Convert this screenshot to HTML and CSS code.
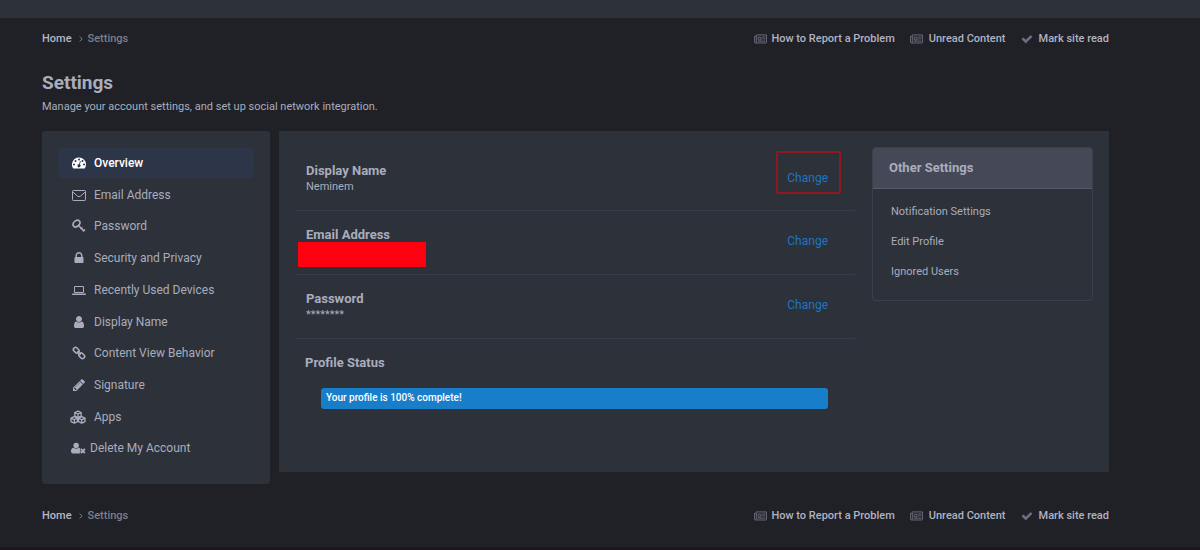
FILE: index.html
```html
<!DOCTYPE html>
<html lang="en">
<head>
  <meta charset="UTF-8">
  <meta name="viewport" content="width=device-width, initial-scale=1.0">
  <title>Settings</title>
  <link rel="stylesheet" href="styles.css">
</head>
<body>
  <svg class="sprite" aria-hidden="true">
    <symbol id="i-news" viewBox="0 0 14 10">
      <path d="M2.5 1v7.2a.9.9 0 0 1-1.9 0V2H2.5M2.5.6h10.9v8a.7.7 0 0 1-.7.7H1.6" fill="none" stroke="currentColor" stroke-width="1"/>
      <path d="M4.500 3h3v3h-3zM8.800 2.800h3.400M8.800 4.800h3.400M4 7.300h8.200" fill="none" stroke="currentColor" stroke-width="1"/>
    </symbol>
    <symbol id="i-check" viewBox="0 0 1792 1792">
      <path d="M1671 566q0 40-28 68l-724 724-136 136q-28 28-68 28t-68-28l-136-136-362-362q-28-28-28-68t28-68l136-136q28-28 68-28t68 28l294 295 656-657q28-28 68-28t68 28l136 136q28 28 28 68z"/>
    </symbol>
    <symbol id="i-overview" viewBox="0 0 14 14">
      <path fill-rule="evenodd" d="M7 1.500a7 7 0 0 1 7 7c0 1.400-.4 2.700-1.100 3.800-.1.200-.3.200-.4.200h-11c-.2 0-.3 0-.4-.2A7 7 0 0 1 7 1.500zM2 7.500a1 1 0 1 0 0 2 1 1 0 0 0 0-2zM3.500 4a1 1 0 1 0 0 2 1 1 0 0 0 0-2zM7 2.500a1 1 0 1 0 0 2 1 1 0 0 0 0-2zM10.500 4a1 1 0 1 0 0 2 1 1 0 0 0 0-2zM12 7.500a1 1 0 1 0 0 2 1 1 0 0 0 0-2zM7.900 5.300 7.100 8.300a1.500 1.500 0 1 0 .8.300l.8-3c.1-.6-.7-.9-.8-.3z"/>
    </symbol>
    <symbol id="i-mail" viewBox="0 0 14 14">
      <path d="M1.300 2.500h11.400a.8.8 0 0 1 .8.800v8.400a.8.8 0 0 1-.8.800H1.300a.8.8 0 0 1-.8-.8V3.300a.8.8 0 0 1 .8-.8zM.8 4l4.700 4.100q1.500 1.200 3 0L13.200 4" fill="none" stroke="currentColor"/>
    </symbol>
    <symbol id="i-key" viewBox="0 0 14 14">
      <g fill="none" stroke="currentColor" stroke-width="1.600">
        <ellipse cx="4.500" cy="4.600" rx="3.800" ry="2.800" transform="rotate(-42 4.500 4.600)"/>
        <path d="M6 6l6.200 6.200M8.700 10.200l1.700-1.700M11 12.600l1.900-2.200"/>
      </g>
    </symbol>
    <symbol id="i-lock" viewBox="0 0 1792 1792">
      <path d="M640 768h512v-192q0-106-75-181t-181-75-181 75-75 181v192zm832 96v576q0 40-28 68t-68 28h-960q-40 0-68-28t-28-68v-576q0-40 28-68t68-28h32v-192q0-184 132-316t316-132 316 132 132 316v192h32q40 0 68 28t28 68z"/>
    </symbol>
    <symbol id="i-laptop" viewBox="0 0 14 14">
      <path d="M2.500 3.500h9v6h-9z" fill="none" stroke="currentColor"/>
      <path d="M0 10.500h14v.7c0 .5-.5.800-1.100.8H1.100C.5 12 0 11.700 0 11.200z"/>
    </symbol>
    <symbol id="i-user" viewBox="0 0 1792 1792">
      <path d="M1536 1399q0 109-62.500 187t-150.500 78h-854q-88 0-150.500-78t-62.500-187q0-85 8.500-160.500t31.500-152 58.500-131 94-89 134.500-34.500q131 128 313 128t313-128q76 0 134.500 34.500t94 89 58.500 131 31.500 152 8.500 160.500zm-256-887q0 159-112.500 271.500t-271.500 112.500-271.500-112.500-112.500-271.500 112.500-271.500 271.500-112.500 271.500 112.500 112.500 271.500z"/>
    </symbol>
    <symbol id="i-link" viewBox="0 0 14 14">
      <g fill="none" stroke="currentColor" stroke-width="1.600" transform="rotate(45 7 7)">
        <rect x="0" y="4.900" width="6.200" height="4.200" rx="2"/>
        <rect x="7.800" y="4.900" width="6.200" height="4.200" rx="2"/>
        <path d="M4.600 7h4.800"/>
      </g>
    </symbol>
    <symbol id="i-pencil" viewBox="0 0 1792 1792">
      <path d="M491 1536l91-91-235-235-91 91v107h128v128h107zm523-928q0-22-22-22-10 0-17 7l-542 542q-7 7-7 17 0 22 22 22 10 0 17-7l542-542q7-7 7-17zm-54-192l416 416-832 832h-416v-416zm683 96q0 53-37 90l-166 166-416-416 166-165q36-38 90-38 53 0 91 38l235 234q37 39 37 91z"/>
    </symbol>
    <symbol id="i-cubes" viewBox="0 0 16 14">
      <g fill="none" stroke="currentColor" stroke-width="1.300" stroke-linejoin="round">
        <path d="M8 1.200l3.200 1.300v3.700L8 7.600 4.800 6.200V2.500zM4.800 2.700L8 4l3.200-1.300M8 4v3.500"/>
        <path d="M4.300 6.700l3.200 1.400v3.500l-3.200 1.500-3.300-1.500V8.100zM1 8.300l3.300 1.300 3.200-1.300M4.300 9.600v3.400"/>
        <path d="M11.700 6.700L15 8.100v3.500l-3.300 1.500-3.200-1.500V8.100zM8.500 8.300l3.200 1.300L15 8.300M11.700 9.600v3.400"/>
      </g>
    </symbol>
    <symbol id="i-user-times" viewBox="0 0 16 14">
      <circle cx="5.500" cy="4.300" r="2.900"/>
      <path d="M3 6.700q2.500 2 5 0c1 0 1.700.5 2.100 1.400L9.300 9l1.300 1.400-1.400 1.500.8.900H2c-1.200 0-2-.8-2-2C0 8.500.8 6.700 3 6.700z"/>
      <path d="M10.600 8l4.200 4.400M14.800 8l-4.200 4.400" stroke="currentColor" stroke-width="1.900"/>
    </symbol>
  </svg>

  <div class="topbar"></div>

  <div class="wrapper">
    <div class="crumbs">
      <nav class="trail" aria-label="Breadcrumb">
        <a href="#">Home</a>
        <svg class="arrow" viewBox="0 0 4 6"><path d="M.7.5L3.200 3 .7 5.500"/></svg>
        <span>Settings</span>
      </nav>
      <div class="quick-links">
        <a href="#"><svg class="news"><use href="#i-news"/></svg>How to Report a Problem</a>
        <a href="#" class="wide"><svg class="news"><use href="#i-news"/></svg>Unread Content</a>
        <a href="#" class="wide"><svg class="check"><use href="#i-check"/></svg>Mark site read</a>
      </div>
    </div>

    <header class="page-header">
      <h1>Settings</h1>
      <p>Manage your account settings, and set up social network integration.</p>
    </header>

    <div class="columns">
      <nav class="sidebar" aria-label="Settings">
        <ul class="menu">
          <li><a href="#" class="active"><svg><use href="#i-overview"/></svg>Overview</a></li>
          <li><a href="#"><svg><use href="#i-mail"/></svg>Email Address</a></li>
          <li><a href="#"><svg><use href="#i-key"/></svg>Password</a></li>
          <li><a href="#"><svg><use href="#i-lock"/></svg>Security and Privacy</a></li>
          <li><a href="#"><svg><use href="#i-laptop"/></svg>Recently Used Devices</a></li>
          <li><a href="#"><svg><use href="#i-user"/></svg>Display Name</a></li>
          <li><a href="#"><svg><use href="#i-link"/></svg>Content View Behavior</a></li>
          <li><a href="#"><svg><use href="#i-pencil"/></svg>Signature</a></li>
          <li><a href="#" class="apps"><svg><use href="#i-cubes"/></svg>Apps</a></li>
          <li><a href="#" class="delete"><svg><use href="#i-user-times"/></svg>Delete My Account</a></li>
        </ul>
      </nav>

      <main class="panel">
        <div class="overview">
          <section class="row">
            <div>
              <h2>Display Name</h2>
              <p>Neminem</p>
            </div>
            <a href="#" class="change marked">Change</a>
          </section>
          <section class="row">
            <div>
              <h2>Email Address</h2>
              <div class="redacted"></div>
            </div>
            <a href="#" class="change">Change</a>
          </section>
          <section class="row">
            <div>
              <h2>Password</h2>
              <p>********</p>
            </div>
            <a href="#" class="change">Change</a>
          </section>
          <section class="status">
            <h2>Profile Status</h2>
            <div class="progress">Your profile is 100% complete!</div>
          </section>
        </div>

        <aside class="other">
          <h2>Other Settings</h2>
          <ul>
            <li><a href="#">Notification Settings</a></li>
            <li><a href="#">Edit Profile</a></li>
            <li><a href="#">Ignored Users</a></li>
          </ul>
        </aside>
      </main>
    </div>

    <div class="crumbs bottom">
      <nav class="trail" aria-label="Breadcrumb">
        <a href="#">Home</a>
        <svg class="arrow" viewBox="0 0 4 6"><path d="M.7.5L3.200 3 .7 5.500"/></svg>
        <span>Settings</span>
      </nav>
      <div class="quick-links">
        <a href="#"><svg class="news"><use href="#i-news"/></svg>How to Report a Problem</a>
        <a href="#" class="wide"><svg class="news"><use href="#i-news"/></svg>Unread Content</a>
        <a href="#" class="wide"><svg class="check"><use href="#i-check"/></svg>Mark site read</a>
      </div>
    </div>
  </div>
  <footer class="footer"></footer>
</body>
</html>
```
FILE: styles.css
```css
* { box-sizing: border-box; }
body { margin: 0; background: #202126; color: #a9adbd; font-family: Roboto, "Liberation Sans", sans-serif; font-size: 11px; line-height: 16px; }
h1, h2, p, ul { margin: 0; padding: 0; }
ul { list-style: none; }
a { color: inherit; text-decoration: none; }
svg { fill: currentColor; }
.sprite { position: absolute; width: 0; height: 0; }

.topbar { height: 18px; background: #2d3139; }
.wrapper { padding: 0 91px 0 42px; }

/* breadcrumb bars */
.crumbs { display: flex; justify-content: space-between; align-items: center; padding-top: 13px; font-weight: 500; }
.trail { display: flex; align-items: center; color: #7c7f8c; }
.trail a { color: #b4b7c6; }
.arrow { width: 4px; height: 6px; margin: 0 5px 0 7px; fill: none; stroke: #7c7f8c; overflow: visible; }
.quick-links { display: flex; gap: 15px; }
.quick-links a { display: flex; align-items: center; gap: 4px; color: #b0b3c2; }
.quick-links .wide { gap: 6px; }
.quick-links svg { color: #6c6f7c; }
.news { width: 13px; height: 10px; }
.check { width: 12px; height: 12px; }
.bottom { padding-top: 24px; }

.page-header { padding: 24px 0 16px; }
.page-header h1 { font-size: 19px; line-height: 24px; font-weight: 700; }
.page-header p { margin-top: 4px; }

.columns { display: flex; align-items: flex-start; gap: 9px; }

/* left menu */
.sidebar { width: 228px; padding: 17px 16px 19px; background: #2d3139; border-radius: 3px; }
.menu { display: grid; grid-auto-rows: 1fr; height: 317px; }
.menu a { display: flex; align-items: center; height: 30px; padding-left: 14px; gap: 8px; font-size: 12px; border-radius: 4px; }
.menu svg { width: 14px; height: 14px; }
.menu .active { background: #2d3648; color: #fff; font-weight: 500; }
.menu .apps { padding-left: 12px; }
.menu .delete { padding-left: 13px; gap: 4px; }
.menu .apps svg { width: 16px; }
.menu .delete svg { width: 15px; }

/* main panel */
.panel { flex: 1; display: flex; align-items: flex-start; gap: 17px; min-height: 341px; padding: 16px 16px 16px 16px; background: #2d3139; }
.overview { flex: 1; }
.overview h2, .other h2 { font-size: 13px; line-height: 16px; font-weight: 700; }
.row { display: flex; justify-content: space-between; align-items: flex-start; height: 64px; padding: 16px 27px 0 11px; border-bottom: 1px solid #373b45; }
.change { margin-top: 6px; font-size: 12px; color: #1d75c4; }
.marked { margin: -12px -13px 0 0; padding: 17px 11px 6px 9px; border: 2px solid #8f1822; border-radius: 2px; }
.redacted { width: 128px; height: 25px; margin: -1px 0 0 -8px; background: #ff0010; }
.status { padding: 16px 27px 0 10px; }
.progress { margin: 17px 0 0 16px; padding: 2px 5px 3px; background: #187ec9; color: #fff; font-size: 10px; font-weight: 500; border-radius: 3px; }

.other { width: 221px; border: 1px solid #3c404b; border-radius: 4px; }
.other h2 { padding: 12px 16px; background: #454957; border-bottom: 1px solid #555968; border-radius: 3px 3px 0 0; }
.other ul { display: grid; gap: 14px; padding: 15px 18px 20px; }

.footer { height: 4px; margin-top: 23px; background: #1c151e; }
```
